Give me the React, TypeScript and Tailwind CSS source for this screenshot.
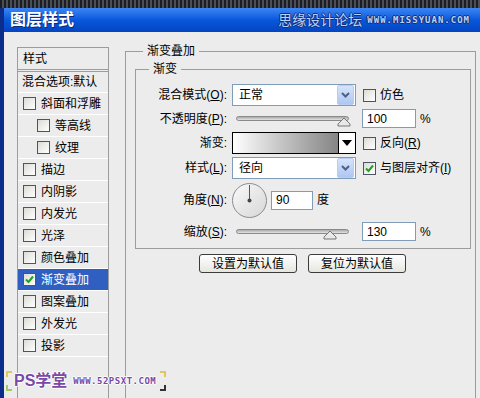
import React from "react";

const FONT = {
  fontFamily: '"Liberation Sans", "Noto Sans CJK SC", sans-serif',
};

const Check = ({ checked = false }: { checked?: boolean }) => (
  <span className="flex h-[13px] w-[13px] shrink-0 items-center justify-center border border-[#4b5563] bg-linear-to-br from-[#dcdcd6] to-white">
    {checked && (
      <svg width="9" height="9" viewBox="0 0 9 9">
        <path d="M1 4.5 L3.5 7 L8 1.5" stroke="#21a121" strokeWidth="2" fill="none" />
      </svg>
    )}
  </span>
);

const DropBtn = () => (
  <span className="flex h-[20px] w-[17px] items-center justify-center rounded-[2px] border border-[#b8cdf2] bg-linear-to-b from-[#d6e4fb] to-[#aec6f1]">
    <svg width="9" height="6" viewBox="0 0 9 6">
      <path d="M1 1 L4.5 4.5 L8 1" stroke="#4d6185" strokeWidth="2" fill="none" />
    </svg>
  </span>
);

const Select = ({ value }: { value: string }) => (
  <div className="flex h-[22px] w-[124px] items-center justify-between border border-[#7f9db9] bg-white pl-[6px] pr-[1px]">
    <span>{value}</span>
    <DropBtn />
  </div>
);

const Slider = ({ pos }: { pos: number }) => (
  <div className="relative flex h-[19px] w-[124px] items-center px-[4px]">
    <div className="h-[5px] w-[113px] rounded-full border border-[#8a8a8a] bg-linear-to-b from-[#a9a9a9] to-[#e4e4e4]" />
    <svg
      className="absolute top-[8px]"
      style={{ left: pos }}
      width="14"
      height="10"
      viewBox="0 0 14 10"
    >
      <path d="M7 1 L13 7 L13 9 L1 9 L1 7 Z" fill="#e8e8e8" stroke="#777" />
    </svg>
  </div>
);

const NumBox = ({ value, w = 54 }: { value: string; w?: number }) => (
  <div
    className="flex h-[19px] items-center border border-[#7f9db9] bg-white pl-[4px]"
    style={{ width: w }}
  >
    {value}
  </div>
);

const items: { label: string; indent?: boolean; checked?: boolean; selected?: boolean }[] = [
  { label: "斜面和浮雕" },
  { label: "等高线", indent: true },
  { label: "纹理", indent: true },
  { label: "描边" },
  { label: "内阴影" },
  { label: "内发光" },
  { label: "光泽" },
  { label: "颜色叠加" },
  { label: "渐变叠加", checked: true, selected: true },
  { label: "图案叠加" },
  { label: "外发光" },
  { label: "投影" },
];

const Corner = ({ className }: { className: string }) => (
  <span className={`block h-[6px] w-[6px] ${className}`} />
);

export default function App() {
  return (
    <div
      className="relative flex h-[398px] w-[480px] flex-col overflow-hidden bg-[#ececec] text-[12px] leading-[16px] text-black"
      style={FONT}
    >
      <div className="h-[8px] shrink-0 bg-[repeating-linear-gradient(90deg,#1b1d22_0px,#1b1d22_2px,#4a4e57_2px,#4a4e57_4px)]" />
      <div className="flex flex-1 flex-col border-l-[4px] border-[#0b2e8c]">
        <div className="flex h-[24px] shrink-0 items-center justify-between bg-linear-to-b from-[#3b85f5] via-[#0858dc] to-[#0444c0] pl-[6px] pr-[10px]">
          <span className="text-[16px] font-bold text-white [text-shadow:1px_1px_0_#0a2a78]">
            图层样式
          </span>
          <div className="flex items-center gap-[5px] text-[#b8d2ff] [text-shadow:1px_0_0_#12307a,-1px_0_0_#12307a,0_1px_0_#12307a,0_-1px_0_#12307a]">
            <span className="text-[14px]">思缘设计论坛</span>
            <span className="text-[9px] font-bold tracking-[1px]" style={{ fontFamily: '"DejaVu Sans Mono", monospace' }}>
              WWW.MISSYUAN.COM
            </span>
          </div>
        </div>

        <div className="flex flex-1 items-start pl-[13px] pt-[11px]">
          {/* left list */}
          <div className="mt-[4px] flex h-[360px] w-[92px] shrink-0 flex-col border-x border-[#9c9c9c]">
            <div className="flex h-[22px] items-center border-t border-[#9c9c9c] pl-[5px]">样式</div>
            <div className="h-[3px] border-y border-[#9c9c9c]" />
            <div className="flex h-[21px] items-center whitespace-nowrap border-b border-white pl-[4px]">
              混合选项:默认
            </div>
            {items.map((it) => (
              <div
                key={it.label}
                className={`flex h-[22px] items-center gap-[5px] border-b border-white ${
                  it.indent ? "pl-[19px]" : "pl-[5px]"
                } ${it.selected ? "bg-[#2f5fc0] text-white" : ""}`}
              >
                <Check checked={it.checked} />
                <span>{it.label}</span>
              </div>
            ))}
          </div>

          {/* right panel */}
          <fieldset className="ml-[16px] h-[370px] w-[351px] shrink-0 border border-[#9c9c9c] pl-[9px] pr-[4px] pt-[2px]">
            <legend className="ml-[8px] px-[4px] leading-[16px]">渐变叠加</legend>
            <fieldset className="border border-[#9c9c9c] pb-[7px] pt-[7px]">
              <legend className="ml-[13px] px-[4px] leading-[16px]">渐变</legend>
              <div className="flex flex-col">
                <div className="flex h-[22px] items-center">
                  <span className="w-[96px] pr-[5px] text-right">
                    混合模式(<u>O</u>):
                  </span>
                  <Select value="正常" />
                  <span className="ml-[7px]"><Check /></span>
                  <span className="ml-[4px]">仿色</span>
                </div>
                <div className="mt-[3px] flex h-[19px] items-center">
                  <span className="w-[96px] pr-[5px] text-right">
                    不透明度(<u>P</u>):
                  </span>
                  <Slider pos={105} />
                  <span className="ml-[6px]"><NumBox value="100" /></span>
                  <span className="ml-[4px]">%</span>
                </div>
                <div className="mt-[4px] flex h-[22px] items-center">
                  <span className="w-[96px] pr-[5px] text-right">渐变:</span>
                  <div className="flex h-[22px] w-[124px] border border-black bg-white">
                    <div className="flex-1 bg-linear-to-r from-white to-[#858585]" />
                    <div className="flex w-[17px] items-center justify-center border-l border-black">
                      <svg width="10" height="6" viewBox="0 0 10 6">
                        <path d="M0 0 H10 L5 6 Z" fill="#000" />
                      </svg>
                    </div>
                  </div>
                  <span className="ml-[7px]"><Check /></span>
                  <span className="ml-[4px]">
                    反向(<u>R</u>)
                  </span>
                </div>
                <div className="mt-[3px] flex h-[22px] items-center">
                  <span className="w-[96px] pr-[5px] text-right">
                    样式(<u>L</u>):
                  </span>
                  <Select value="径向" />
                  <span className="ml-[7px]"><Check checked /></span>
                  <span className="ml-[4px]">
                    与图层对齐(<u>I</u>)
                  </span>
                </div>
                <div className="mt-[3px] flex h-[36px] items-center">
                  <span className="w-[96px] pr-[5px] text-right">
                    角度(<u>N</u>):
                  </span>
                  <svg className="-ml-[1px]" width="37" height="37" viewBox="0 0 37 37">
                    <defs>
                      <linearGradient id="dial" x1="0" y1="0" x2="1" y2="1">
                        <stop offset="0" stopColor="#fafafa" />
                        <stop offset="1" stopColor="#d6d6d6" />
                      </linearGradient>
                    </defs>
                    <circle cx="18.5" cy="18.5" r="17" fill="url(#dial)" stroke="#8c8c8c" />
                    <line x1="18.5" y1="18.5" x2="18.5" y2="3" stroke="#555" strokeWidth="1" />
                    <circle cx="18.5" cy="18.5" r="2" fill="#444" />
                  </svg>
                  <span className="ml-[3px]"><NumBox value="90" w={42} /></span>
                  <span className="ml-[4px]">度</span>
                </div>
                <div className="mt-[4px] flex h-[19px] items-center">
                  <span className="w-[96px] pr-[5px] text-right">
                    缩放(<u>S</u>):
                  </span>
                  <Slider pos={91} />
                  <span className="ml-[6px]"><NumBox value="130" /></span>
                  <span className="ml-[4px]">%</span>
                </div>
              </div>
            </fieldset>
            <div className="ml-[64px] mt-[5px] flex gap-[11px]">
              <button className="flex h-[19px] w-[98px] items-center justify-center rounded-[3px] border border-[#3c3c3c] bg-linear-to-b from-white to-[#e6e6e0]">
                设置为默认值
              </button>
              <button className="flex h-[19px] w-[98px] items-center justify-center rounded-[3px] border border-[#3c3c3c] bg-linear-to-b from-white to-[#e6e6e0]">
                复位为默认值
              </button>
            </div>
          </fieldset>
        </div>
      </div>

      {/* watermark */}
      <div className="absolute left-[6px] top-[371px] flex items-center gap-[2px]">
        <div className="flex h-[20px] flex-col justify-between">
          <Corner className="border-l-2 border-t-2 border-[#e0c860]" />
          <Corner className="border-b-2 border-l-2 border-[#9ccc60]" />
        </div>
        <span className="text-[16px] font-bold text-[#7a4aa6] [text-shadow:1px_0_0_#fff,-1px_0_0_#fff,0_1px_0_#fff,0_-1px_0_#fff]">
          PS学堂
        </span>
        <span
          className="ml-[4px] text-[9px] font-bold tracking-[0.5px] text-[#7a4aa6] [text-shadow:1px_0_0_#fff,-1px_0_0_#fff,0_1px_0_#fff,0_-1px_0_#fff]"
          style={{ fontFamily: '"DejaVu Sans Mono", monospace' }}
        >
          WWW.52PSXT.COM
        </span>
        <div className="ml-[2px] flex h-[20px] flex-col justify-between">
          <Corner className="border-r-2 border-t-2 border-[#e0c860]" />
          <Corner className="border-b-2 border-r-2 border-[#333]" />
        </div>
      </div>
    </div>
  );
}
